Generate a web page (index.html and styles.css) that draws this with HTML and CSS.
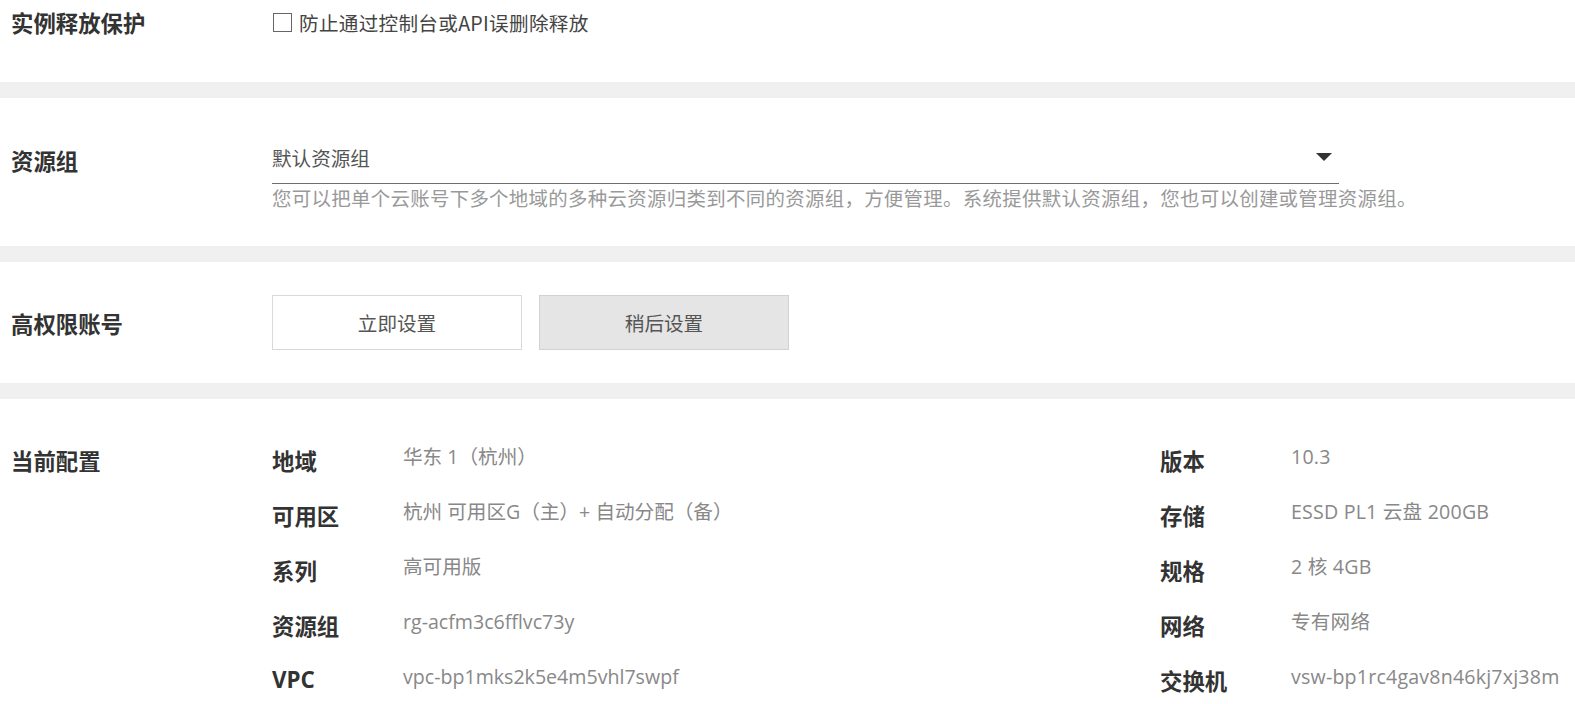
FILE: index.html
```html
<!DOCTYPE html>
<html lang="zh-CN">
<head>
<meta charset="utf-8">
<title>实例配置</title>
<link rel="stylesheet" href="styles.css">
</head>
<body>
<div class="page">
  <section class="section s-protect">
    <div class="label">实例释放保护</div>
    <div class="content">
      <label class="checkbox"><span class="box"></span><span class="cb-text">防止通过控制台或API误删除释放</span></label>
    </div>
  </section>

  <section class="section s-group">
    <div class="label">资源组</div>
    <div class="content">
      <div class="select">
        <span class="select-text">默认资源组</span>
        <svg class="caret" width="16" height="8" viewBox="0 0 16 8"><path d="M0 0H16L8 8Z" fill="#333"/></svg>
      </div>
      <div class="help">您可以把单个云账号下多个地域的多种云资源归类到不同的资源组，方便管理。系统提供默认资源组，您也可以创建或管理资源组。</div>
    </div>
  </section>

  <section class="section s-account">
    <div class="label">高权限账号</div>
    <div class="content buttons">
      <button class="btn">立即设置</button>
      <button class="btn btn-active">稍后设置</button>
    </div>
  </section>

  <section class="section s-config">
    <div class="label">当前配置</div>
    <div class="content config">
      <div class="col col-left">
        <div class="k">地域</div><div class="v">华东 1（杭州）</div>
        <div class="k">可用区</div><div class="v">杭州 可用区G（主）+ 自动分配（备）</div>
        <div class="k">系列</div><div class="v">高可用版</div>
        <div class="k">资源组</div><div class="v">rg-acfm3c6fflvc73y</div>
        <div class="k k-latin">VPC</div><div class="v">vpc-bp1mks2k5e4m5vhl7swpf</div>
      </div>
      <div class="col col-right">
        <div class="k">版本</div><div class="v">10.3</div>
        <div class="k">存储</div><div class="v">ESSD PL1 云盘 200GB</div>
        <div class="k">规格</div><div class="v">2 核 4GB</div>
        <div class="k">网络</div><div class="v">专有网络</div>
        <div class="k">交换机</div><div class="v">vsw-bp1rc4gav8n46kj7xj38m</div>
      </div>
    </div>
  </section>
</div>
</body>
</html>
```

FILE: styles.css
```css
* { box-sizing: border-box; }

html, body {
  margin: 0;
  padding: 0;
  background: #ffffff;
  overflow: hidden;
}

body {
  font-family: "Open Sans", "Noto Sans CJK SC", sans-serif;
  font-size: 19.6px;
  color: #333;
}

.page {
  display: flex;
  flex-direction: column;
  gap: 16px;
  background: #f0f0f0;
  width: 1575px;
  min-height: 704px;
}

.section {
  display: flex;
  flex: none;
  align-items: flex-start;
  background: #fff;
  padding-left: 11px;
}

.label {
  width: 261px;
  flex: none;
  font-family: "Noto Sans CJK SC", sans-serif;
  font-weight: bold;
  font-size: 22.4px;
  line-height: 32px;
  color: #333;
}

.content {
  flex: 1;
}

/* section 1 */
.s-protect {
  height: 82px;
  padding-top: 6px;
}
.checkbox {
  display: flex;
  align-items: center;
  height: 32px;
  gap: 7px;
  color: #444;
  font-family: "Noto Sans CJK SC", sans-serif;
}
.box {
  width: 19px;
  height: 19px;
  border: 1px solid #666;
  background: #fff;
  margin-left: 1px;
}
.cb-text {
  letter-spacing: 0.3px;
}

/* section 2 */
.s-group {
  height: 148px;
  padding-top: 39px;
}
.s-group .label {
  line-height: 46px;
}
.select {
  width: 1067px;
  height: 47px;
  display: flex;
  align-items: center;
  justify-content: space-between;
  padding-bottom: 5px;
  border-bottom: 1.5px solid #6e6e6e;
  font-family: "Noto Sans CJK SC", sans-serif;
  color: #555;
}
.caret {
  margin-right: 7px;
  margin-top: -1px;
}
.help {
  line-height: 28px;
  color: #999;
  font-family: "Noto Sans CJK SC", sans-serif;
  font-size: 19.45px;
  letter-spacing: 0.3px;
  white-space: nowrap;
}

/* section 3 */
.s-account {
  height: 121px;
  align-items: center;
}
.buttons {
  display: flex;
  gap: 17px;
}
.btn {
  width: 250px;
  height: 55px;
  border: 1px solid #d9d9d9;
  background: #fff;
  font-family: "Noto Sans CJK SC", sans-serif;
  font-size: 19.6px;
  color: #555;
  padding: 0;
}
.btn-active {
  background: #e5e5e5;
  border-color: #d2d2d2;
}

/* section 4 */
.s-config {
  flex: 1 0 auto;
  padding-top: 45px;
}
.config {
  display: flex;
}
.col {
  display: grid;
  grid-template-columns: 131px auto;
  grid-auto-rows: 55px;
  align-items: start;
}
.col-left {
  width: 888px;
}
.k {
  font-family: "Noto Sans CJK SC", sans-serif;
  font-weight: bold;
  font-size: 22.4px;
  line-height: 32px;
  color: #333;
}
.k-latin {
  font-family: "Open Sans", "Noto Sans CJK SC", sans-serif;
}
.v {
  line-height: 26px;
  color: #888;
  white-space: nowrap;
}
.col-right .v {
  letter-spacing: 0.2px;
}
```
